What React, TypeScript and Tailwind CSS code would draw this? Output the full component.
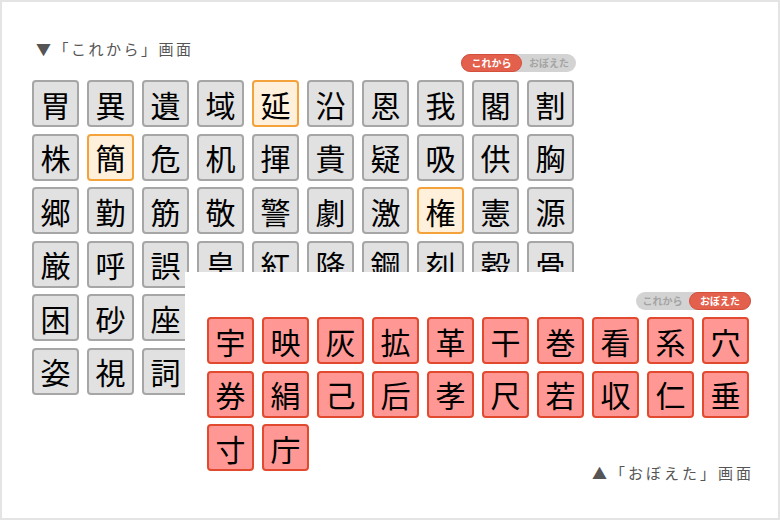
import * as React from "react"

const jp = { fontFamily: '"Noto Sans CJK JP", "Noto Sans", sans-serif' }

// rows 5 and 6 past column 3 sit under the おぼえた panel, so they carry no text
const korekara = [
  "胃", "異", "遺", "域", "延", "沿", "恩", "我", "閣", "割",
  "株", "簡", "危", "机", "揮", "貴", "疑", "吸", "供", "胸",
  "郷", "勤", "筋", "敬", "警", "劇", "激", "権", "憲", "源",
  "厳", "呼", "誤", "皇", "紅", "降", "鋼", "刻", "穀", "骨",
  "困", "砂", "座", "", "", "", "", "", "", "",
  "姿", "視", "詞", "", "", "", "", "", "", "",
]

// highlighted = picked but not yet learned
const picked = ["延", "簡", "権"]

const oboeta = [
  "宇", "映", "灰", "拡", "革", "干", "巻", "看", "系", "穴",
  "券", "絹", "己", "后", "孝", "尺", "若", "収", "仁", "垂",
  "寸", "庁",
]

function Toggle({ active }: { active: "korekara" | "oboeta" }) {
  const on = "rounded-full bg-[#e3604c] border border-[#d4503c] text-white h-full flex items-center justify-center"
  const off = "text-[#a4a4a4] h-full flex items-center justify-center flex-1"
  return (
    <div className="flex h-[18px] w-[115px] rounded-full bg-[#d3d3d3] text-[10px] font-bold leading-none" style={jp}>
      {active === "korekara" ? (
        <>
          <div className={on + " w-[61px]"}>これから</div>
          <div className={off}>おぼえた</div>
        </>
      ) : (
        <>
          <div className={off}>これから</div>
          <div className={on + " w-[62px]"}>おぼえた</div>
        </>
      )}
    </div>
  )
}

function Tile({ ch, kind }: { ch: string; kind: "gray" | "orange" | "red" }) {
  const cls =
    kind === "red"
      ? "bg-[#ff9894] border-[#e14a2e]"
      : kind === "orange"
        ? "bg-[#fff0dc] border-[#f3a23c]"
        : "bg-[#e1e1e1] border-[#a6a6a6]"
  return (
    <div
      className={"h-[47px] w-[47px] rounded-[4px] border-2 flex items-center justify-center text-[30px] leading-none text-black " + cls}
      style={jp}
    >
      {ch}
    </div>
  )
}

export default function App() {
  return (
    <div className="relative w-[780px] h-[520px] overflow-hidden border-2 border-[#e4e4e4] bg-white" style={jp}>
      {/* これから screen */}
      <div className="pl-[30px] pt-[37px]">
        <div className="w-[544px]">
          <div className="flex items-start justify-between">
            <div className="pl-[4px] text-[15px] leading-[20px] tracking-[2.5px] text-[#555]">▼「これから」画面</div>
            <div className="mt-[15px]">
              <Toggle active="korekara" />
            </div>
          </div>
          <div className="mt-[8px] grid grid-cols-[repeat(10,47px)] gap-x-[8px] gap-y-[6.5px]">
            {korekara.map((c, i) => (
              <Tile key={i} ch={c} kind={picked.includes(c) ? "orange" : "gray"} />
            ))}
          </div>
        </div>
      </div>

      {/* おぼえた screen, laid over the first one */}
      <div className="absolute left-[183px] top-[270px] right-0 bottom-0 bg-white pl-[22px] pt-[20px]">
        <div className="w-[544px]">
          <div className="flex justify-end">
            <Toggle active="oboeta" />
          </div>
          <div className="mt-[7px] grid grid-cols-[repeat(10,47px)] gap-x-[8px] gap-y-[6.5px]">
            {oboeta.map((c, i) => (
              <Tile key={i} ch={c} kind="red" />
            ))}
          </div>
          <div className="-mt-[8px] -mr-[3px] flex justify-end">
            <div className="text-[15px] leading-[20px] tracking-[3px] text-[#555]">▲「おぼえた」画面</div>
          </div>
        </div>
      </div>
    </div>
  )
}
